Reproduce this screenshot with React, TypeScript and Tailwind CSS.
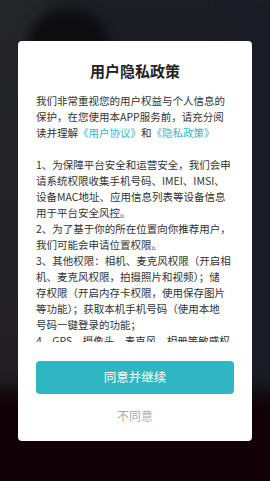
const bodyLines = [
  "我们非常重视您的用户权益与个人信息的",
  "保护，在您使用本APP服务前，请充分阅",
  "LINKS",
  "",
  "1、为保障平台安全和运营安全，我们会申",
  "请系统权限收集手机号码、IMEI、IMSI、",
  "设备MAC地址、应用信息列表等设备信息",
  "用于平台安全风控。",
  "2、为了基于你的所在位置向你推荐用户，",
  "我们可能会申请位置权限。",
  "3、其他权限：相机、麦克风权限（开启相",
  "机、麦克风权限，拍摄照片和视频）；储",
  "存权限（开启内存卡权限，使用保存图片",
  "等功能）；获取本机手机号码（使用本地",
  "号码一键登录的功能；",
  "4、GPS、摄像头、麦克风、相册等敏感权",
];

export default function App() {
  return (
    <div
      className="relative w-[270px] h-[481px] overflow-hidden bg-gradient-to-b from-[#1c1e24] via-[#141419] to-[#110207]"
      style={{ fontFamily: '"Noto Sans CJK SC", "Noto Sans", sans-serif' }}
    >
      {/* blurred backdrop photo */}
      <div className="absolute left-[-30px] top-[-20px] w-[80px] h-[420px] bg-[#2a2a2d] blur-[14px] opacity-70" />
      <div className="absolute left-[28px] top-[10px] w-[80px] h-[70px] rounded-full bg-[#0d0d10] blur-[6px]" />
      <div className="absolute right-[-20px] top-[0px] w-[60px] h-[420px] bg-[#191c26] blur-[10px]" />
      <div className="absolute left-[-20px] bottom-[-20px] w-[310px] h-[110px] bg-[#120207] blur-[10px]" />

      <div className="relative flex h-full items-center justify-center">
        <div className="flex h-[400px] w-[234px] flex-col items-center rounded-[4px] bg-white">
          <div className="mt-[20px] h-[20px] text-[15px] font-bold leading-[20px] text-[#222]">
            用户隐私政策
          </div>
          <div className="mt-[12px] h-[249px] w-[198px] overflow-hidden text-[10.5px] leading-[16px] text-[#333]">
            {bodyLines.map((l, i) =>
              l === "LINKS" ? (
                <div key={i} className="whitespace-nowrap">
                  读并理解<span className="text-[#3bb5c6]">《用户协议》</span>和
                  <span className="text-[#3bb5c6]">《隐私政策》</span>
                </div>
              ) : (
                <div key={i} className="h-[16px] whitespace-nowrap">
                  {l}
                </div>
              )
            )}
          </div>
          <button className="mt-[19px] h-[33px] w-[198px] rounded-[4px] bg-[#2fb6c3] text-[12.5px] text-white">
            同意并继续
          </button>
          <div className="mt-[12px] h-[20px] text-[12px] leading-[20px] text-[#aaaaaa]">不同意</div>
        </div>
      </div>
    </div>
  );
}
